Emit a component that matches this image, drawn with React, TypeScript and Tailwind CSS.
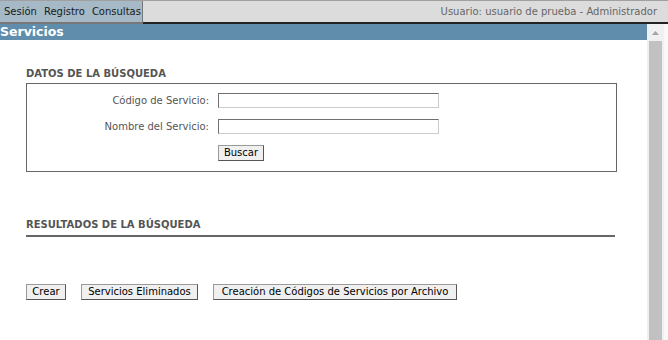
import React from "react";

const font = { fontFamily: '"DejaVu Sans", Verdana, sans-serif' };

function Btn({ children, w }: { children: React.ReactNode; w: string }) {
  return (
    <button
      className={`${w} h-[16px] p-0 flex items-center justify-center text-[10px] leading-[12px] text-black bg-[#f0f0f0] border border-t-[#9a9a9a] border-l-[#9a9a9a] border-r-[#555] border-b-[#555]`}
    >
      {children}
    </button>
  );
}

function Field({ label }: { label: string }) {
  return (
    <div className="flex items-center h-[15px]">
      <div className="w-[191px] text-right text-[10px] text-[#555] pr-[9px] leading-[15px]">{label}</div>
      <div className="w-[221px] h-[15px] bg-white border border-t-[#707070] border-l-[#707070] border-r-[#ccc] border-b-[#ccc]" />
    </div>
  );
}

export default function App() {
  return (
    <div className="w-[668px] h-[340px] bg-white relative overflow-hidden" style={font}>
      <div className="flex h-[24px] bg-[#dcdcdc] border-t border-[#a0a0a0]">
        <div className="w-[143px] bg-[#a5b9c7] border-r border-b-2 border-r-[#777] border-b-[#777] flex items-center pl-[4px] text-[10px] text-[#1a1a1a] gap-[7px]">
          <span>Sesión</span>
          <span>Registro</span>
          <span>Consultas</span>
        </div>
        <div className="flex-1 border-b-2 border-[#222] flex items-center justify-end pr-[11px] text-[10px] text-[#666]">
          Usuario: usuario de prueba - Administrador
        </div>
      </div>
      <div className="flex">
        <div className="flex-1">
          <div className="h-[16px] bg-[#5f8dab] text-white font-bold text-[12.5px] leading-[16px]">Servicios</div>
          <div className="pl-[26px] pr-[30px]">
            <div className="mt-[28px] text-[10px] font-bold text-[#555] leading-[12px]">DATOS DE LA BÚSQUEDA</div>
            <div className="mt-[3px] h-[89px] border border-[#666] pt-[9px] flex flex-col gap-[11px]">
              <Field label="Código de Servicio:" />
              <Field label="Nombre del Servicio:" />
              <div className="pl-[191px]">
                <Btn w="w-[46px]">Buscar</Btn>
              </div>
            </div>
            <div className="mt-[47px] text-[10px] font-bold text-[#555] leading-[12px]">RESULTADOS DE LA BÚSQUEDA</div>
            <div className="mt-[4px] h-[2px] bg-[#666] mr-[2px]" />
            <div className="mt-[47px] flex gap-[15px]">
              <Btn w="w-[40px]">Crear</Btn>
              <Btn w="w-[117px]">Servicios Eliminados</Btn>
              <Btn w="w-[244px]">Creación de Códigos de Servicios por Archivo</Btn>
            </div>
          </div>
        </div>
        <div className="w-[21px] h-[316px] flex">
          <div className="w-[17px] h-full bg-[#f0f0f0] flex flex-col items-center">
            <div className="h-[17px] w-full flex items-center justify-center">
              <svg width="7" height="4" viewBox="0 0 7 4">
                <path d="M0 4 L3.5 0 L7 4 Z" fill="#a3a3a3" />
              </svg>
            </div>
            <div className="w-[13px] flex-1 bg-[#c1c1c1]" />
          </div>
          <div className="flex-1 bg-[#f8f8f8]" />
        </div>
      </div>
    </div>
  );
}
